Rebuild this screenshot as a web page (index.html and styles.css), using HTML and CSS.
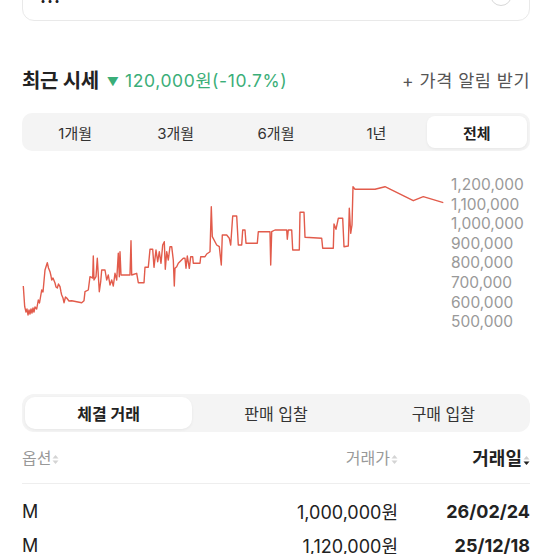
FILE: index.html
```html
<!DOCTYPE html>
<html lang="ko">
<head>
  <meta charset="UTF-8">
  <meta name="viewport" content="width=device-width, initial-scale=1.0">
  <title>최근 시세</title>
  <link rel="stylesheet" href="styles.css">
</head>
<body>
    <div class="page">
        <div class="top-card">
            <span class="top-text">...</span>
            <span class="top-icon"></span>
        </div>

        <div class="title-row">
            <div class="title">
                <h2>최근 시세</h2>
                <span class="change"><span class="tri">▼</span> 120,000원(-10.7%)</span>
            </div>
            <span class="alert">+ 가격 알림 받기</span>
        </div>

        <div class="segment">
            <button>1개월</button>
            <button>3개월</button>
            <button>6개월</button>
            <button>1년</button>
            <button class="active">전체</button>
        </div>

        <div class="chart">
            <svg class="chart-line" width="425" height="160" viewBox="22 175 425 160">
                <polyline fill="none" stroke="#e25b4b" stroke-width="1.4" stroke-linejoin="round" points="
                    23.3,286 24.7,306.7 26,312 27,309 28,315 29,310 30,314 31,309 32,313 33,308 34,312 35,307 36.7,309
                    38.3,300 39.5,303 41.7,290 43,292 45,270 47.3,262.7 48.5,268 50,271.7 51,276 51.7,280 53,278 55,283
                    56,287 57.3,288 58.5,284 60,286.7 61,292 61.7,295 63,298 64,302.7 65.5,297 66.7,298 69,301 71.7,300.7
                    76.7,301.7 81.7,302.7 84,300.7 85,291.7 88.3,290 90,276.7 92.7,278 93.3,256 94,280 96,276.7 97.3,258.3
                    98.7,281.7 99.3,291.7 100.7,281.7 101.7,270 105,270 106.7,280 108.3,275 110,285 111.7,280 113.3,286
                    115,273.3 116.7,280 118.3,253.3 119.3,276.7 120,251.7 121,275 130,275 131,240.7 131.7,275 136.7,273.3
                    138.3,282.7 144,282.7 145,267.3 148.3,267.3 150,249.3 152.7,249.3 154,267.3 156,250 157.7,261.7
                    159.3,251.7 161,263.3 162.7,245 164.3,241.7 165.3,269.3 166.7,251.7 168.3,260 170,246.7 171.7,246.7
                    173.3,260 174.3,286 175,268.3 176.7,266.7 178.3,263.3 183.3,258.3 185,258.3 186,268.3 187.3,256
                    189.3,268.3 190.7,256.7 192.7,256.7 193.3,263.3 200,263.3 200.7,256.7 205,256.7 206.7,254 210,251.7
                    211.3,206.7 212.3,236.7 216.7,245 219.3,246.7 221.3,265 222.3,235 226.7,235 229.3,238.3 230.7,245
                    232.7,216 236.7,216 238.3,245 241.7,245 242.7,230 245,230 246,243.3 257.3,243.3 258.3,231.7 270,231.7
                    270.7,265 271.7,231.7 275,230 286.7,230 287.3,239.3 288.3,230 291.7,230 292.7,250 299.3,250 300,212.3
                    304,212.3 305,237.3 321.7,238.3 322.7,248.3 333.3,248.3 334,224 336,229.3 338.3,218.3 342.7,218.3
                    344,246.7 348.3,246 349.3,208.3 350.7,233.3 352,225 353,186.7 355,189.3 375,189.3 385,186.7
                    413.3,200.7 423.3,196.7 443.3,202.7"/>
            </svg>
            <ul class="axis">
                <li>1,200,000</li>
                <li>1,100,000</li>
                <li>1,000,000</li>
                <li>900,000</li>
                <li>800,000</li>
                <li>700,000</li>
                <li>600,000</li>
                <li>500,000</li>
            </ul>
        </div>

        <div class="segment trade-tabs">
            <button class="active">체결 거래</button>
            <button>판매 입찰</button>
            <button>구매 입찰</button>
        </div>

        <div class="table-head">
            <span class="col-option">옵션<svg class="sort" width="7" height="11" viewBox="0 0 7 11"><path d="M3.5 1 L6.5 4.5 L0.5 4.5 Z" fill="#d4d4d4"/><path d="M3.5 10 L6.5 6.5 L0.5 6.5 Z" fill="#d4d4d4"/></svg></span>
            <span class="col-price">거래가<svg class="sort" width="7" height="11" viewBox="0 0 7 11"><path d="M3.5 1 L6.5 4.5 L0.5 4.5 Z" fill="#d4d4d4"/><path d="M3.5 10 L6.5 6.5 L0.5 6.5 Z" fill="#d4d4d4"/></svg></span>
            <span class="col-date strong">거래일<svg class="sort" width="7" height="11" viewBox="0 0 7 11"><path d="M3.5 1 L6.5 4.5 L0.5 4.5 Z" fill="#cfcfcf"/><path d="M3.5 10 L6.5 6.5 L0.5 6.5 Z" fill="#222"/></svg></span>
        </div>

        <div class="trade-list">
            <div class="trade-row">
                <span class="col-option">M</span>
                <span class="col-price">1,000,000원</span>
                <span class="col-date">26/02/24</span>
            </div>
            <div class="trade-row">
                <span class="col-option">M</span>
                <span class="col-price">1,120,000원</span>
                <span class="col-date">25/12/18</span>
            </div>
        </div>
    </div>
</body>
</html>
```

FILE: styles.css
```css
body {
  font-family: Inter, 'Noto Sans CJK KR', sans-serif;
  background: #fff;
  color: #222;
  margin: 0;
  padding: 0;
  overflow: hidden;
}
.page {
  padding: 0 24px 0 22px;
}
.top-card {
  margin-top: -30px;
  height: 49px;
  border: 1px solid #e9e9e9;
  border-radius: 12px;
  display: flex;
  justify-content: space-between;
  align-items: flex-start;
  padding: 0 17px;
}
.top-text {
  font-size: 18px;
  font-weight: 700;
  line-height: 20px;
  margin-top: 16px;
  letter-spacing: 1px;
  color: #222;
}
.top-icon {
  width: 20px;
  height: 20px;
  border: 1px solid #d8d8d8;
  border-radius: 50%;
  margin-top: 13px;
}
.title-row {
  margin-top: 46px;
  height: 24px;
  display: flex;
  justify-content: space-between;
  align-items: center;
}
.title {
  display: flex;
  align-items: center;
  gap: 8px;
}
.title h2 {
  margin: 0;
  font-size: 20px;
  font-weight: 700;
  color: #222;
  letter-spacing: -0.3px;
}
.change {
  color: #3aae78;
  font-size: 17.5px;
  letter-spacing: 0.6px;
}
.tri {
  font-size: 12px;
  position: relative;
  top: -1px;
}
.alert {
  color: #555;
  font-size: 17.5px;
  letter-spacing: 0.5px;
}
.segment {
  margin-top: 22px;
  height: 38px;
  background: #f4f4f4;
  border-radius: 10px;
  padding: 3px;
  box-sizing: border-box;
  display: grid;
  grid-template-columns: repeat(5, 1fr);
}
.segment button {
  border: none;
  background: transparent;
  font-family: inherit;
  font-size: 15px;
  color: #333;
  border-radius: 8px;
  padding: 0;
  cursor: pointer;
}
.segment button.active {
  background: #fff;
  font-weight: 700;
  color: #222;
  box-shadow: 0 1px 3px rgba(0, 0, 0, 0.06);
}
.chart {
  margin-top: 24px;
  height: 160px;
  display: flex;
  gap: 4px;
}
.chart-line {
  display: block;
}
.axis {
  list-style: none;
  margin: 0;
  padding: 0;
  color: #999;
  font-size: 15.5px;
}
.axis li {
  line-height: 19.6px;
}
.trade-tabs {
  margin-top: 59px;
  grid-template-columns: repeat(3, 1fr);
  border-radius: 12px;
}
.trade-tabs button {
  font-size: 16px;
  border-radius: 10px;
}
.table-head {
  display: flex;
  align-items: center;
  margin-top: 13px;
  height: 24px;
  padding-bottom: 14px;
  border-bottom: 1px solid #eee;
  font-size: 16px;
  color: #999;
}
.sort {
  margin-left: 1px;
  vertical-align: -1px;
}
.col-option {
  flex: 1;
}
.col-price {
  width: 140px;
  text-align: right;
}
.col-date {
  width: 132px;
  text-align: right;
}
.table-head .strong {
  color: #222;
  font-weight: 700;
  font-size: 18px;
}
.trade-list {
  padding-top: 10px;
}
.trade-row {
  display: flex;
  align-items: center;
  height: 34px;
  font-size: 18px;
  color: #222;
}
.trade-row .col-date {
  font-weight: 700;
}
```
